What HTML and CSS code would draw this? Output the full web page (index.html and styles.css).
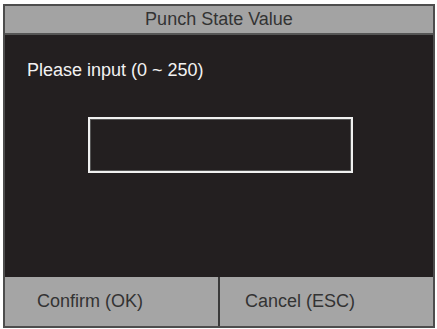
FILE: index.html
```html
<!DOCTYPE html>
<html>
<head>
<meta charset="utf-8">
<link rel="stylesheet" href="styles.css">
</head>
<body>
<div class="frame">
  <div class="title">Punch State Value</div>
  <div class="content">
    <div class="prompt">Please input (0 ~ 250)</div>
    <div class="input-box"></div>
  </div>
  <div class="buttons">
    <div class="btn btn-left">Confirm (OK)</div>
    <div class="btn btn-right">Cancel (ESC)</div>
  </div>
</div>
</body>
</html>
```
FILE: styles.css
```css
html, body {
  margin: 0;
  padding: 0;
  background: #ffffff;
}
body {
  padding: 4px 0 0 3px;
  font-family: "Liberation Sans", Arial, sans-serif;
}
.frame {
  width: 428px;
  height: 320px;
  border: 2px solid #4d4d4d;
  display: flex;
  flex-direction: column;
  background: #231f20;
}
.title {
  height: 27px;
  background: #a3a3a3;
  border-bottom: 2px solid #555;
  color: #333;
  font-size: 18px;
  line-height: 27px;
  text-align: center;
}
.content {
  flex: 1;
  background: #231f20;
  padding: 25px 0 0 22px;
  box-sizing: border-box;
}
.prompt {
  color: #f2f2f2;
  font-size: 18px;
  line-height: 20px;
}
.input-box {
  margin: 37px 0 0 61px;
  width: 261px;
  height: 52px;
  border: 2px solid #f0f0f0;
  box-shadow: inset 0 0 0 1px #555;
}
.buttons {
  height: 49px;
  display: flex;
  background: #a5a5a5;
}
.btn {
  color: #333;
  font-size: 18px;
  line-height: 49px;
}
.btn-left {
  width: 215px;
  padding-left: 32px;
  box-sizing: border-box;
  border-right: 2px solid #3a3a3a;
}
.btn-right {
  flex: 1;
  padding-left: 25px;
}
```
